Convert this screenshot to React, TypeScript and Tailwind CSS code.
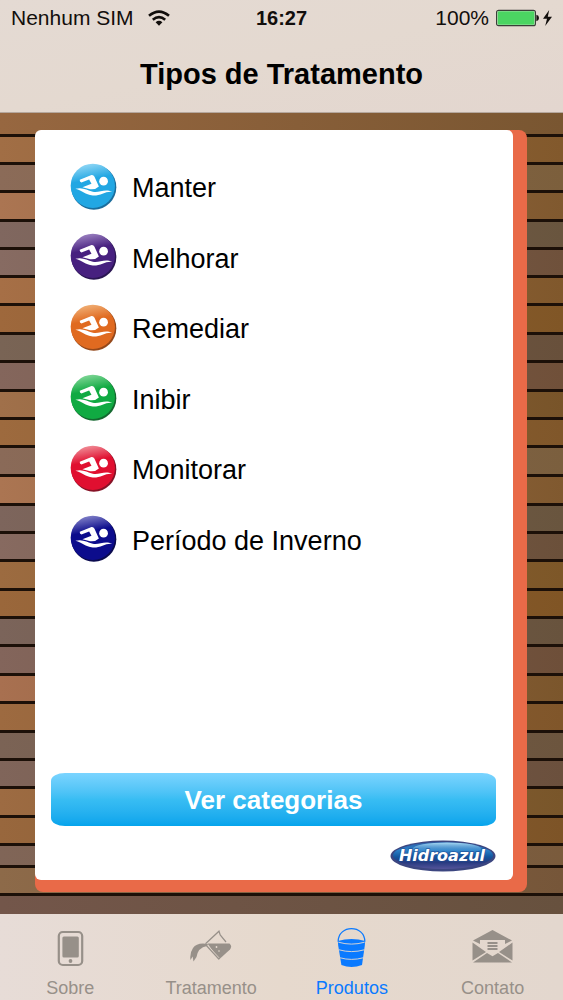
import React from "react";

type Treatment = {
  name: string;
  light: string;
  base: string;
  dark: string;
};

const treatments: Treatment[] = [
  { name: "Manter", light: "#8fd6f5", base: "#22a7e3", dark: "#1b6d9c" },
  { name: "Melhorar", light: "#9a80c0", base: "#47207f", dark: "#2a1552" },
  { name: "Remediar", light: "#f0ae74", base: "#e06a20", dark: "#94481a" },
  { name: "Inibir", light: "#7fd696", base: "#10aa42", dark: "#14682f" },
  { name: "Monitorar", light: "#f08c96", base: "#e00f30", dark: "#861226" },
  {
    name: "Período de Inverno",
    light: "#8080c8",
    base: "#0c0c8c",
    dark: "#0a0a4e",
  },
];

// one entry per deck board, top to bottom
const planks = [
  "h-6 from-[#976740] to-[#795631]",
  "h-7 from-[#a16e45] to-[#82592c]",
  "h-7 from-[#8b6b58] to-[#7c5f3c]",
  "h-[29px] from-[#ab7552] to-[#80592f]",
  "h-7 from-[#80675f] to-[#69553e]",
  "h-7 from-[#876b62] to-[#6f513b]",
  "h-7 from-[#a66f46] to-[#80582c]",
  "h-[29px] from-[#9e683c] to-[#805626]",
  "h-7 from-[#796455] to-[#68503b]",
  "h-[29px] from-[#84665c] to-[#705039]",
  "h-7 from-[#a0704a] to-[#785429]",
  "h-7 from-[#9d6a3e] to-[#80572a]",
  "h-[29px] from-[#8a6a58] to-[#7b5f3e]",
  "h-[29px] from-[#ab7552] to-[#80592f]",
  "h-7 from-[#7d655c] to-[#69553e]",
  "h-7 from-[#876a60] to-[#6b503a]",
  "h-[29px] from-[#9c6b40] to-[#7d5728]",
  "h-7 from-[#9a673b] to-[#805525]",
  "h-7 from-[#7b645a] to-[#68533d]",
  "h-[29px] from-[#83655b] to-[#6e4f39]",
  "h-7 from-[#a87050] to-[#7b562c]",
  "h-[29px] from-[#9d6a40] to-[#80562a]",
  "h-7 from-[#7b6355] to-[#6c553e]",
  "h-7 from-[#80655a] to-[#6b503d]",
  "h-[29px] from-[#9d6b42] to-[#79562a]",
  "h-7 from-[#98673d] to-[#7d5427]",
  "h-[22px] from-[#806557] to-[#7a5b3c]",
  "h-7 from-[#8d6a49] to-[#765639]",
  "h-7 from-[#73564a] to-[#67513e]",
];

const Deck = () => (
  <div
    aria-hidden="true"
    className="h-0 min-h-full overflow-hidden bg-[#6f5442] [grid-area:1/1]"
  >
    {planks.map((plank, i) => (
      <div
        key={i}
        className={`border-b-3 border-[#1c1008] bg-linear-to-r ${plank}`}
      />
    ))}
  </div>
);

const Swimmer = ({ light, base, dark }: Omit<Treatment, "name">) => {
  const id = `swim-${base.slice(1)}`;
  return (
    <svg viewBox="0 0 140 140" className="size-[47px] shrink-0" aria-hidden="true">
      <defs>
        <linearGradient id={id} x1="0.4" y1="0" x2="0.6" y2="1">
          <stop offset="0" stopColor={light} />
          <stop offset="0.35" stopColor={base} />
          <stop offset="1" stopColor={base} />
        </linearGradient>
      </defs>
      <circle cx="71" cy="72" r="67" fill={dark} />
      <circle cx="68" cy="68" r="66" fill={`url(#${id})`} />
      <path
        d="M29 50 L64 36 Q70 35 73 41 L86 70 Q76 80 60 78 L37 72 L64 62 L57 49 L34 58 Q28 56 29 50Z"
        fill="#fff"
      />
      <circle cx="100" cy="54" r="13" fill="#fff" />
      <path
        d="M16 77 C38 71 50 81 68 86 C88 90 102 75 126 86 C106 83 92 98 68 97 C44 95 38 82 16 77Z"
        fill="#fff"
      />
    </svg>
  );
};

const Logo = () => (
  <svg viewBox="0 0 106 32" className="h-8 w-[106px]" role="img" aria-label="Hidroazul">
    <defs>
      <linearGradient id="logo-fill" x1="0" y1="0" x2="0" y2="1">
        <stop offset="0" stopColor="#2d5fa8" />
        <stop offset="0.3" stopColor="#2a80c8" />
        <stop offset="0.55" stopColor="#12569f" />
        <stop offset="0.75" stopColor="#263a80" />
        <stop offset="1" stopColor="#54549a" />
      </linearGradient>
      <linearGradient id="logo-gloss" x1="0" y1="0" x2="0" y2="1">
        <stop offset="0" stopColor="#a9dcf5" />
        <stop offset="1" stopColor="#2a80c8" stopOpacity="0" />
      </linearGradient>
    </defs>
    <ellipse cx="53" cy="16" rx="52.5" ry="15.5" fill="#3c4680" />
    <ellipse cx="53" cy="15.5" rx="50" ry="13.5" fill="url(#logo-fill)" />
    <ellipse cx="57" cy="8.5" rx="34" ry="6" fill="url(#logo-gloss)" />
    <text
      x="52"
      y="21"
      textAnchor="middle"
      fill="#fff"
      stroke="#1f4a90"
      strokeWidth="1.2"
      paintOrder="stroke"
      className="font-['DejaVu_Sans',sans-serif] text-[16px] font-bold italic"
    >
      Hidroazul
    </text>
  </svg>
);

const StatusBar = () => (
  <div className="grid h-9 grid-cols-[1fr_auto_1fr] items-center px-[11px] text-[21px] text-[#120e0c]">
    <div className="flex items-center gap-3.5">
      <span>Nenhum SIM</span>
      <svg viewBox="0 0 22 16" className="h-4 w-[22px]" fill="none" stroke="currentColor" strokeWidth="2.6" aria-hidden="true">
        <path d="M1 5.8 Q11 -2.6 21 5.8" />
        <path d="M4.8 9.8 Q11 4.6 17.2 9.8" />
        <path d="M7.6 12.2 Q11 9.4 14.4 12.2 L11 15.8Z" fill="currentColor" stroke="none" />
      </svg>
    </div>
    <span className="text-[20px] font-bold">16:27</span>
    <div className="flex items-center justify-end gap-[7px]">
      <span>100%</span>
      <svg viewBox="0 0 56 18" className="h-[18px] w-14" aria-hidden="true">
        <rect x="0.6" y="1.3" width="38.8" height="15.4" rx="2" fill="#f4eee9" stroke="#3a3f38" strokeWidth="1.2" />
        <rect x="1.6" y="2.3" width="36.8" height="13.4" rx="1" fill="#4bd562" />
        <path d="M40.4 5.8 Q43 6.3 43 9 T40.4 12.2Z" fill="currentColor" />
        <path d="M53.2 1 L47 9.8 H51 L49.2 17 L56 7.8 H51.8Z" fill="currentColor" />
      </svg>
    </div>
  </div>
);

const PhoneIcon = () => (
  <svg viewBox="0 0 42 42" className="size-[42px]" aria-hidden="true">
    <rect x="9.8" y="5" width="23.4" height="33" rx="4" fill="none" stroke="currentColor" strokeWidth="2.2" />
    <rect x="13.4" y="9.4" width="16.4" height="21" rx="1.5" fill="currentColor" />
    <circle cx="21.5" cy="34" r="1.9" fill="currentColor" />
  </svg>
);

const FlaskIcon = () => (
  <svg viewBox="0 0 42 42" className="size-[42px]" aria-hidden="true">
    <path d="M15.5 16.8 L29 4.2 L30.2 8 L36 15" fill="none" stroke="currentColor" strokeWidth="1.2" />
    <path d="M17.5 16.6 H39.5 Q42.5 19 40 22.5 L29 32.5 Z" fill="currentColor" />
    <path d="M17 18 L29 30.8" stroke="#e6dad0" strokeWidth="1" />
    <path d="M15.5 17.5 L29 32.4" stroke="currentColor" strokeWidth="1.2" />
    <path d="M18 17 Q7 15 3 21 Q-0.5 26 0.5 33 L2.6 29.5 L3.5 34.5 L6.5 30 Q8 20.5 17 19Z" fill="currentColor" />
    <circle cx="26.5" cy="20" r="0.9" fill="#e6dad0" />
    <circle cx="29" cy="24" r="0.8" fill="#e6dad0" />
  </svg>
);

const BucketIcon = () => (
  <svg viewBox="0 0 42 42" className="size-[42px]" aria-hidden="true">
    <path d="M7.2 14.5 C7.2 -2.6 33.8 -2.6 33.8 14.5" fill="none" stroke="currentColor" strokeWidth="1.3" />
    <path d="M6.8 14 Q20.5 9.8 34.2 14 L33.8 18.5 L31 38 Q20.5 42 10.4 38 L7.2 18.5Z" fill="currentColor" />
    <path d="M7.4 15.2 Q20.5 19 33.6 15.2 M8 22.8 Q20.5 26.4 33.4 22.8 M9.1 30.8 Q20.5 34 32.2 30.8" fill="none" stroke="#e6dad0" strokeWidth="0.9" />
  </svg>
);

const MailIcon = () => (
  <svg viewBox="0 0 42 42" className="size-[42px]" aria-hidden="true">
    <path d="M1 13.5 L20.5 3 L40 13.5 L33 17 V13 H8 V17Z" fill="currentColor" />
    <path d="M15.5 16 H25.5 M15.5 19 H25.5 M15.5 22 H25.5" stroke="currentColor" strokeWidth="1.8" />
    <path d="M0.5 15.6 L14 25 L0.5 33.6Z M40.5 15.6 L27 25 L40.5 33.6Z" fill="currentColor" />
    <path d="M1 35.4 L15 26 L20.5 29.2 L26 26 L40 35.4Z" fill="currentColor" />
  </svg>
);

const tabs = [
  { label: "Sobre", icon: <PhoneIcon />, active: false },
  { label: "Tratamento", icon: <FlaskIcon />, active: false },
  { label: "Produtos", icon: <BucketIcon />, active: true },
  { label: "Contato", icon: <MailIcon />, active: false },
];

const App = () => {
  return (
    <div className="flex min-h-screen flex-col font-['Liberation_Sans',Arial,sans-serif] text-black">
      <header className="border-b border-[#b5a79d] bg-linear-to-br from-[#e4dad3] via-[#e4d9d0] to-[#e3d6cf]">
        <StatusBar />
        <h1 className="flex h-19 items-center justify-center pt-0.5 text-[29px] font-bold">
          Tipos de Tratamento
        </h1>
      </header>

      <main className="grid flex-1">
        <Deck />
        <div className="z-10 flex flex-col pt-[17px] pr-9 pb-[22px] pl-[35px] [grid-area:1/1]">
          <div className="flex flex-1 flex-col rounded-lg bg-[#e96a48] pr-3.5 pb-3">
            <div className="flex flex-1 flex-col rounded-md bg-white pt-[21px] pr-[17px] pb-2 pl-4">
              <ul className="mb-6 grid h-[423px] grid-rows-6 pl-[19px]">
                {treatments.map(({ name, ...colors }) => (
                  <li key={name} className="flex">
                    <a href="#" className="flex items-center gap-[15px] text-[27px]">
                      <Swimmer {...colors} />
                      <span className="pt-1">{name}</span>
                    </a>
                  </li>
                ))}
              </ul>
              <button
                type="button"
                className="mt-auto h-[53px] rounded-[14px/8px] bg-linear-to-b from-[#7ad4ff] via-[#38bdf3] to-[#04a4ec] pt-0.5 text-[26px] font-bold text-white"
              >
                Ver categorias
              </button>
              <div className="mt-3.5 flex justify-end">
                <Logo />
              </div>
            </div>
          </div>
        </div>
      </main>

      <nav className="grid h-[86px] grid-cols-4 bg-linear-to-r from-[#e7dcd7] via-[#e6d9cd] to-[#e3d7ce]">
        {tabs.map(({ label, icon, active }) => (
          <a
            key={label}
            href="#"
            aria-current={active ? "page" : undefined}
            className={`flex flex-col items-center pt-[13px] ${active ? "text-[#0a7aff]" : "text-[#979089]"}`}
          >
            {icon}
            <span className="mt-[7px] text-[18px] leading-6">{label}</span>
          </a>
        ))}
      </nav>
    </div>
  );
};

export default App;
